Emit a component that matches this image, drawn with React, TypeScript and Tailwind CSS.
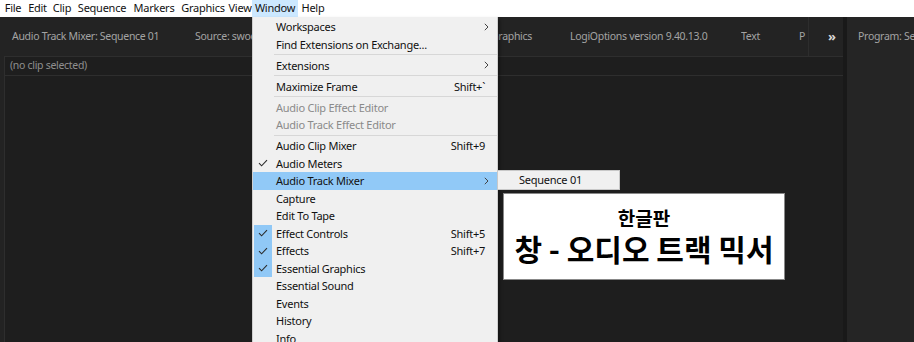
import React from "react";

type Item =
  | { kind: "item"; label: string; shortcut?: string; sub?: boolean; disabled?: boolean; check?: boolean; checkBg?: boolean; active?: boolean }
  | { kind: "sep" };

const items: Item[] = [
  { kind: "item", label: "Workspaces", sub: true },
  { kind: "item", label: "Find Extensions on Exchange..." },
  { kind: "sep" },
  { kind: "item", label: "Extensions", sub: true },
  { kind: "sep" },
  { kind: "item", label: "Maximize Frame", shortcut: "Shift+`" },
  { kind: "sep" },
  { kind: "item", label: "Audio Clip Effect Editor", disabled: true },
  { kind: "item", label: "Audio Track Effect Editor", disabled: true },
  { kind: "sep" },
  { kind: "item", label: "Audio Clip Mixer", shortcut: "Shift+9" },
  { kind: "item", label: "Audio Meters", check: true },
  { kind: "item", label: "Audio Track Mixer", sub: true, active: true },
  { kind: "item", label: "Capture" },
  { kind: "item", label: "Edit To Tape" },
  { kind: "item", label: "Effect Controls", shortcut: "Shift+5", check: true, checkBg: true },
  { kind: "item", label: "Effects", shortcut: "Shift+7", check: true, checkBg: true },
  { kind: "item", label: "Essential Graphics", check: true, checkBg: true },
  { kind: "item", label: "Essential Sound" },
  { kind: "item", label: "Events" },
  { kind: "item", label: "History" },
  { kind: "item", label: "Info" },
];

const Check = () => (
  <svg width="10" height="8" viewBox="0 0 10 8" fill="none">
    <path d="M1 4.2 L3.6 6.8 L9 1.2" stroke="#2b2b2b" strokeWidth="1.1" />
  </svg>
);

const Chevron = () => (
  <svg width="5" height="8" viewBox="0 0 5 8" fill="none">
    <path d="M0.8 0.8 L4 4 L0.8 7.2" stroke="#444" strokeWidth="1" />
  </svg>
);

const menuBar: { label: string; w: number; active?: boolean }[] = [
  { label: "File", w: 24 },
  { label: "Edit", w: 25 },
  { label: "Clip", w: 24 },
  { label: "Sequence", w: 56 },
  { label: "Markers", w: 48 },
  { label: "Graphics", w: 50 },
  { label: "View", w: 24 },
  { label: "Window", w: 46, active: true },
  { label: "Help", w: 30 },
];

export default function App() {
  const sys = { fontFamily: '"Noto Sans", "Liberation Sans", sans-serif' };
  const adobe = { fontFamily: '"Noto Sans", "Open Sans", sans-serif' };
  return (
    <div className="relative w-[914px] h-[342px] overflow-hidden bg-[#232323]">
      {/* menu bar */}
      <div className="h-[17px] bg-white flex items-stretch text-[11px] tracking-[-0.25px] text-[#111] pl-[1px]" style={sys}>
        {menuBar.map((m) => (
          <div
            key={m.label}
            style={{ width: m.w }}
            className={`shrink-0 flex items-center justify-center ${m.active ? "bg-[#cce8ff]" : ""}`}
          >
            {m.label}
          </div>
        ))}
      </div>

      {/* workspace */}
      <div className="flex h-[325px]">
        <div className="w-[843px] shrink-0 flex flex-col bg-[#232323]">
          <div className="h-[39px] flex items-center text-[10.5px] tracking-[-0.3px] text-[#a3a3a3] whitespace-nowrap" style={adobe}>
            <div className="w-[195px] shrink-0 pl-[12px] overflow-hidden">Audio Track Mixer: Sequence 01</div>
            <div className="w-[296px] shrink-0 overflow-hidden">Source: swoosh</div>
            <div className="w-[79px] shrink-0 overflow-hidden">Graphics</div>
            <div className="w-[171px] shrink-0 overflow-hidden">LogiOptions version 9.40.13.0</div>
            <div className="w-[58px] shrink-0 overflow-hidden">Text</div>
            <div className="w-[9px] shrink-0 overflow-hidden">P</div>
            <div className="w-[1px] h-[39px] shrink-0 bg-[#2d2d2d]" />
            <div className="w-[34px] shrink-0 pl-[19px] text-[#d6d6d6] font-bold text-[13px] leading-none">»</div>
          </div>
          <div className="flex-1 ml-[4px] border-t border-l border-[#2e2e2e] bg-[#1e1e1e] flex flex-col">
            <div className="h-[19px] border-b border-[#2e2e2e] flex items-center pl-[5px] text-[10.5px] tracking-[-0.3px] text-[#8f8f8f]" style={adobe}>
              (no clip selected)
            </div>
          </div>
        </div>
        <div className="w-[4px] shrink-0 bg-[#191919]" />
        <div className="flex-1 min-w-0 bg-[#252525] flex flex-col overflow-hidden">
          <div className="h-[39px] flex items-center text-[10.5px] tracking-[-0.3px] text-[#a3a3a3] pl-[11px] whitespace-nowrap" style={adobe}>
            Program: Sequence 01
          </div>
        </div>
      </div>

      {/* dropdown menu */}
      <div
        className="absolute left-[252px] top-[17px] w-[246px] bg-[#f0f0f0] border-l border-r border-[#cfcfcf] pt-[1px] text-[11px] tracking-[-0.25px] text-[#111] shadow-[2px_2px_3px_rgba(0,0,0,0.35)]"
        style={sys}
      >
        {items.map((it, i) =>
          it.kind === "sep" ? (
            <div key={i} className="h-[3.5px] flex items-center pl-[21px]">
              <div className="h-[1px] w-full bg-[#d7d7d7]" />
            </div>
          ) : (
            <div
              key={i}
              className={`relative h-[17.5px] flex items-center pl-[23px] pr-[8px] ${it.active ? "bg-[#91c9f7]" : ""} ${it.disabled ? "text-[#8a8a8a]" : ""}`}
            >
              {it.check && (
                <div className={`absolute left-[1px] top-0 w-[18px] h-full flex items-center justify-center ${it.checkBg ? "bg-[#90c8f6]" : ""}`}>
                  <Check />
                </div>
              )}
              <span className="flex-1 leading-none">{it.label}</span>
              {it.shortcut && <span className="mr-[4px] leading-none">{it.shortcut}</span>}
              {it.sub && <Chevron />}
            </div>
          )
        )}
      </div>

      {/* submenu */}
      <div
        className="absolute left-[497px] top-[170px] w-[123px] h-[20px] bg-[#f0f0f0] border border-[#c8c8c8] flex items-center pl-[21px] text-[11px] tracking-[-0.25px] text-[#111]"
        style={sys}
      >
        Sequence 01
      </div>

      {/* Korean caption */}
      <div
        className="absolute left-[503px] top-[193px] w-[282px] h-[87px] bg-white border border-[#888] flex flex-col items-center justify-center text-black"
        style={{ fontFamily: '"Noto Sans CJK KR", "Noto Sans", sans-serif' }}
      >
        <div className="text-[19px] font-bold leading-[22px]">한글판</div>
        <div className="text-[30px] font-bold leading-[38px]">창 - 오디오 트랙 믹서</div>
      </div>
    </div>
  );
}
